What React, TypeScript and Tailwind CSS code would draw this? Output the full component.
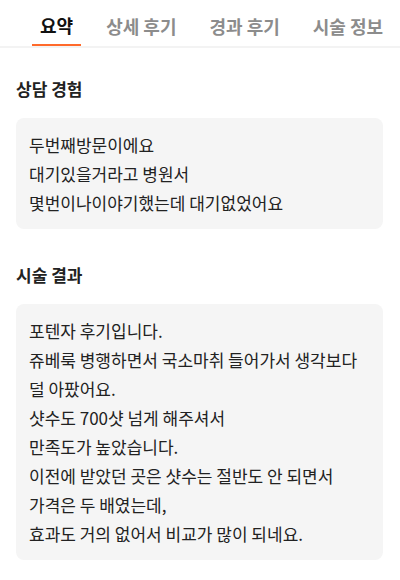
import React from "react";

const tabs = ["요약", "상세 후기", "경과 후기", "시술 정보"];

const sections = [
  {
    title: "상담 경험",
    lines: ["두번째방문이에요", "대기있을거라고 병원서", "몇번이나이야기했는데 대기없었어요"],
  },
  {
    title: "시술 결과",
    lines: [
      "포텐자 후기입니다.",
      "쥬베룩 병행하면서 국소마취 들어가서 생각보다",
      "덜 아팠어요.",
      "샷수도 700샷 넘게 해주셔서",
      "만족도가 높았습니다.",
      "이전에 받았던 곳은 샷수는 절반도 안 되면서",
      "가격은 두 배였는데,",
      "효과도 거의 없어서 비교가 많이 되네요.",
    ],
  },
];

export default function App() {
  return (
    <div
      className="w-[400px] h-[580px] bg-white overflow-hidden"
      style={{ fontFamily: '"Noto Sans CJK KR", "Noto Sans", sans-serif' }}
    >
      <div className="flex gap-[17px] pl-[32px] border-b-2 border-[#f3f3f3] h-[48px]">
        {tabs.map((t, i) => (
          <div
            key={t}
            className={
              i === 0
                ? "px-2 pt-[6px] h-[46px] flex items-center border-b-2 border-[#ff6a2b] text-[18px] font-bold text-[#111111] whitespace-nowrap"
                : "px-2 pt-[6px] h-[46px] flex items-center text-[18px] font-bold text-[#8c8c8c] whitespace-nowrap"
            }
          >
            {t}
          </div>
        ))}
      </div>
      <div className="pl-4 pr-[17px] pt-[29px]">
        {sections.map((s, i) => (
          <div key={s.title} className={i === 0 ? "" : "mt-[34px]"}>
            <div className="text-[17px] leading-[24px] font-bold text-[#222222]">{s.title}</div>
            <div className="mt-[17px] rounded-lg bg-[#f5f5f5] px-[13px] py-3 text-[17px] leading-[29px] text-[#222222]">
              {s.lines.map((l) => (
                <div key={l} className="whitespace-nowrap">{l}</div>
              ))}
            </div>
          </div>
        ))}
      </div>
    </div>
  );
}
